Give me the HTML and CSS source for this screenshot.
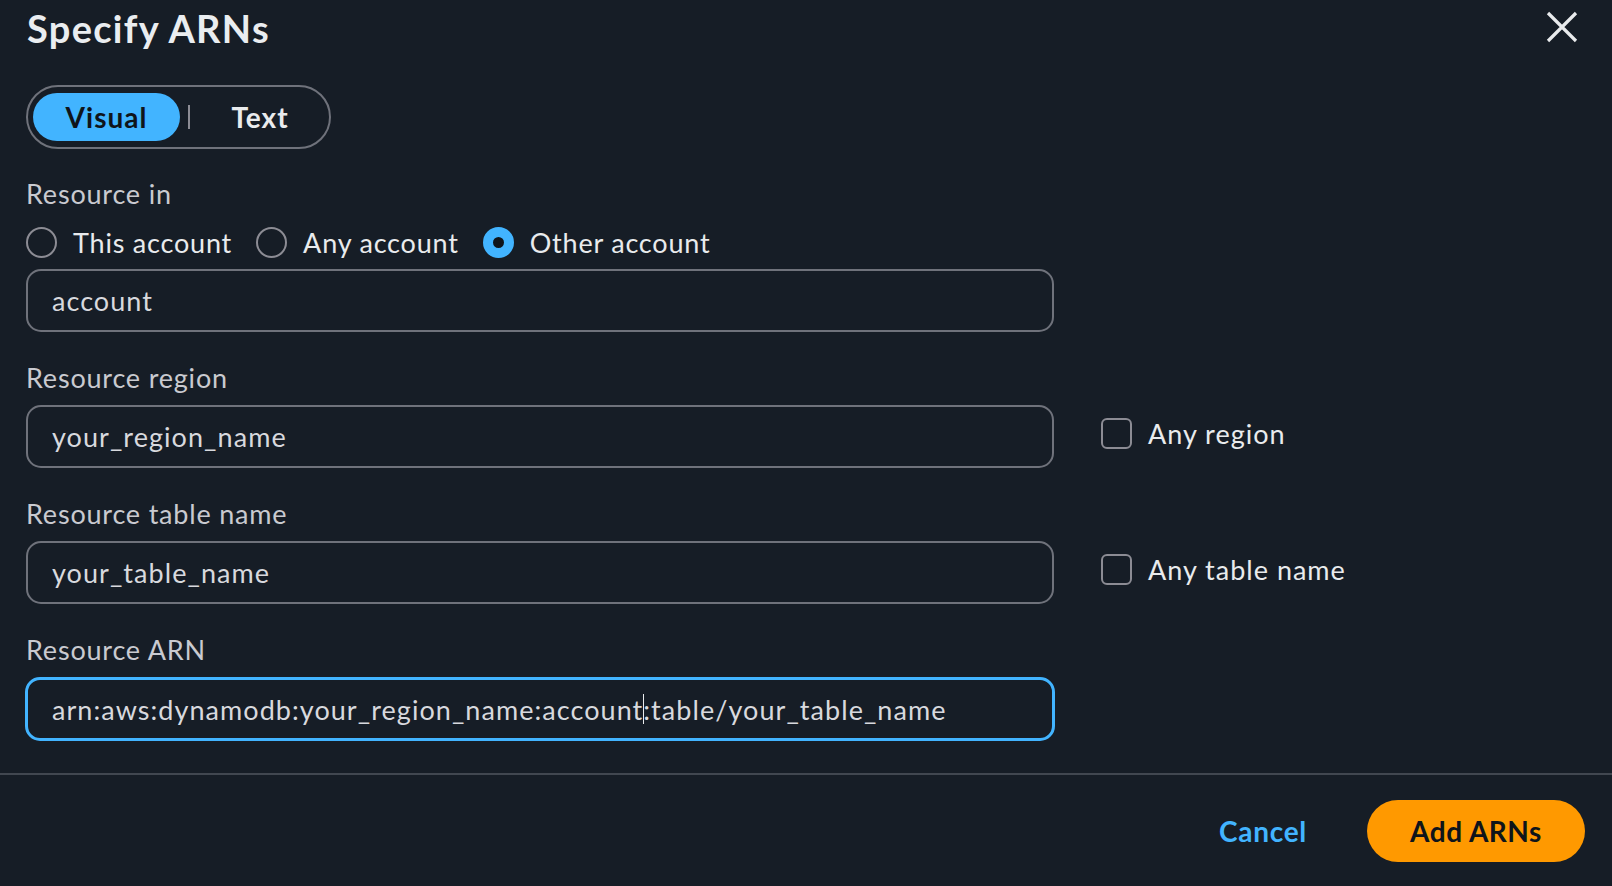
FILE: index.html
```html
<!DOCTYPE html>
<html lang="en">
<head>
<meta charset="utf-8">
<title>Specify ARNs</title>
<link rel="stylesheet" href="styles.css">
</head>
<body>
<div class="dialog">
  <div class="header">
    <h2 class="title">Specify ARNs</h2>
    <button class="close" aria-label="Close">
      <svg viewBox="0 0 34 34" width="34" height="34"><path d="M3 3 L31 31 M31 3 L3 31" stroke="#e9ebed" stroke-width="3.2" fill="none"/></svg>
    </button>
  </div>
  <div class="content">
    <div class="seg">
      <span class="seg-opt active">Visual</span>
      <span class="seg-sep"></span>
      <span class="seg-opt">Text</span>
    </div>

    <div class="label label-first">Resource in</div>
    <div class="radios">
      <label class="radio"><span class="dot"></span>This account</label>
      <label class="radio"><span class="dot"></span>Any account</label>
      <label class="radio"><span class="dot on"></span>Other account</label>
    </div>
    <div class="row row-tight">
      <div class="input">account</div>
    </div>

    <div class="label">Resource region</div>
    <div class="row">
      <div class="input">your_region_name</div>
      <label class="check"><span class="box"></span>Any region</label>
    </div>

    <div class="label">Resource table name</div>
    <div class="row">
      <div class="input">your_table_name</div>
      <label class="check"><span class="box"></span>Any table name</label>
    </div>

    <div class="label">Resource ARN</div>
    <div class="row">
      <div class="input focus">arn:aws:dynamodb:your_region_name:account<span class="caret"></span>:table/your_table_name</div>
    </div>
  </div>
  <div class="divider"></div>
  <div class="footer">
    <button class="btn-link">Cancel</button>
    <button class="btn-primary">Add ARNs</button>
  </div>
</div>
</body>
</html>
```
FILE: styles.css
```css
* { box-sizing: border-box; }
html, body { margin: 0; padding: 0; }
body {
  background: #161d26;
  font-family: Lato, "Open Sans", sans-serif;
  color: #e9ebed;
}
.dialog {
  width: 1612px;
  height: 886px;
  display: flex;
  flex-direction: column;
}
.header {
  display: flex;
  justify-content: space-between;
  align-items: flex-start;
  padding: 5px 33px 0 27px;
}
.title {
  margin: 0;
  font-size: 38px;
  line-height: 46px;
  font-weight: 700;
  letter-spacing: 1.3px;
  color: #eaedf0;
}
.close {
  width: 34px;
  height: 34px;
  padding: 0;
  margin-top: 5px;
  border: 0;
  background: none;
  display: block;
}
.close svg { display: block; }
.content {
  padding: 34px 27px 0 26px;
  display: flex;
  flex-direction: column;
  align-items: flex-start;
}
.seg {
  display: inline-flex;
  align-items: center;
  border: 2px solid #6f727b;
  border-radius: 34px;
  padding: 6px 5px;
  height: 64px;
}
.seg-opt {
  height: 48px;
  display: flex;
  align-items: center;
  justify-content: center;
  font-size: 28px;
  font-weight: 700;
  letter-spacing: 1px;
  color: #e9ebed;
  border-radius: 24px;
  width: 134px;
  padding-left: 6px;
}
.seg-opt.active {
  width: 147px;
  padding-left: 0;
  background: #42b4ff;
  color: #0f141a;
}
.seg-sep {
  width: 2px;
  height: 24px;
  background: #8c8c94;
  margin-left: 8px;
}
.label {
  font-size: 27px;
  line-height: 34px;
  letter-spacing: 0.8px;
  color: #c9cad0;
  margin-top: 29px;
}
.label-first { margin-top: 28px; }
.radios {
  display: flex;
  align-items: center;
  gap: 24px;
  margin-top: 12px;
  height: 38px;
}
.radio {
  display: flex;
  align-items: center;
  gap: 16px;
  font-size: 27px;
  letter-spacing: 0.8px;
  color: #e9ebed;
}
.dot {
  width: 31px;
  height: 31px;
  border-radius: 50%;
  border: 2px solid #8c8c94;
  display: inline-block;
}
.dot.on {
  border: 10px solid #42b4ff;
  background: #0f141a;
}
.row {
  display: flex;
  align-items: center;
  gap: 47px;
  margin-top: 10px;
}
.row-tight { margin-top: 8px; }
.input {
  width: 1028px;
  height: 63px;
  border: 2px solid #6f727b;
  border-radius: 15px;
  padding: 0 24px;
  display: flex;
  align-items: center;
  font-size: 27px;
  letter-spacing: 1.05px;
  color: #d8d9de;
  white-space: nowrap;
}
.input.focus {
  border: 3px solid #42b4ff;
  height: 64px;
  width: 1030px;
  margin-left: -1px;
  padding-left: 24px;
}
.caret {
  display: inline-block;
  width: 1px;
  height: 30px;
  background: #e9ebed;
  margin: 0 -1px 0 0;
}
.check {
  display: flex;
  align-items: center;
  gap: 16px;
  font-size: 27px;
  letter-spacing: 1px;
  color: #e9ebed;
  margin-top: -6px;
}
.box {
  width: 31px;
  height: 31px;
  border: 2px solid #8c8c94;
  border-radius: 6px;
  display: inline-block;
}
.divider {
  height: 2px;
  background: #414750;
  margin-top: 32px;
}
.footer {
  display: flex;
  justify-content: flex-end;
  align-items: center;
  gap: 60px;
  padding: 25px 27px 0 0;
}
.btn-link {
  border: 0;
  background: none;
  padding: 0;
  font-family: inherit;
  font-size: 28px;
  font-weight: 700;
  letter-spacing: 0.7px;
  color: #42b4ff;
}
.btn-primary {
  width: 218px;
  height: 62px;
  border: 0;
  border-radius: 31px;
  background: #ff9900;
  color: #0f141a;
  font-family: inherit;
  font-size: 28px;
  font-weight: 700;
  letter-spacing: 0.5px;
}
```
